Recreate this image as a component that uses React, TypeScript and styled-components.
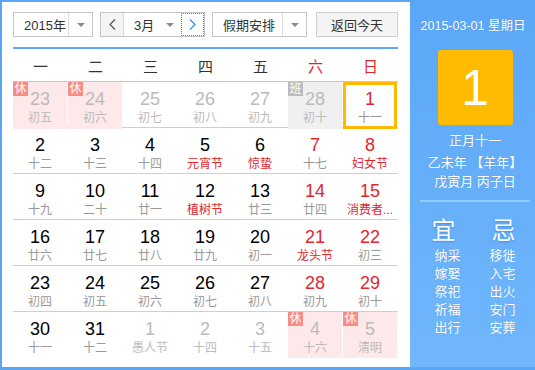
import React from 'react'
import styled, { createGlobalStyle } from 'styled-components'

const GlobalStyle = createGlobalStyle`
	body {
		margin: 0;
		font-family: "Liberation Sans", "Noto Sans CJK SC", sans-serif;
	}
`

const RED = '#e3262c'

const Frame = styled.div`
	width: 535px;
	height: 370px;
	box-sizing: border-box;
	border: 2px solid #5aa6f6;
	border-bottom-width: 3px;
	border-right: 0;
	display: flex;
	background: #fff;
`

const LeftPanel = styled.div`
	width: 408px;
	box-sizing: border-box;
	padding: 10px 12px 0 11px;
`

const Toolbar = styled.div`
	display: flex;
	gap: 7px;
	height: 25px;
	padding-bottom: 10px;
	border-bottom: 2px solid #5ea9f6;
	font-size: 13px;
	color: #333;
`

const Select = styled.div<{ $w: number }>`
	display: flex;
	width: ${p => p.$w}px;
	box-sizing: border-box;
	border: 1px solid #c5c5c5;
	background: #fff;
`

const SelectLabel = styled.div`
	flex: 1;
	display: flex;
	align-items: center;
	padding-left: 10px;
`

const ArrowBox = styled.div<{ $line?: boolean }>`
	width: 23px;
	display: flex;
	align-items: center;
	justify-content: center;
	border-left: ${p => (p.$line ? '1px solid #dcdcdc' : '0')};
	&::after {
		content: '';
		border: 4px solid transparent;
		border-top: 4px solid #8a8a8a;
		border-bottom: 0;
	}
`

const NavButton = styled.div<{ $focus?: boolean }>`
	width: 23px;
	display: flex;
	align-items: center;
	justify-content: center;
	box-sizing: border-box;
	background: ${p => (p.$focus ? '#fff' : '#f4f4f4')};
	border-right: ${p => (p.$focus ? '0' : '1px solid #d8d8d8')};
	outline: ${p => (p.$focus ? '1px dotted #2f8ff0' : 'none')};
	outline-offset: -1px;
`

const TodayButton = styled.div`
	margin-left: auto;
	width: 82px;
	box-sizing: border-box;
	border: 1px solid #cfcfcf;
	background: #f4f4f4;
	display: flex;
	align-items: center;
	justify-content: center;
`

const WeekHeader = styled.div`
	display: grid;
	grid-template-columns: repeat(7, 55px);
	height: 32px;
	align-items: center;
	border-bottom: 1px solid #c8c8c8;
	font-size: 15px;
	color: #333;
	text-align: center;
`

const WeekDay = styled.div<{ $red?: boolean }>`
	color: ${p => (p.$red ? RED : '#333')};
`

const WeekRow = styled.div`
	display: grid;
	grid-template-columns: repeat(7, 55px);
	height: 46px;
	box-sizing: border-box;
	border-bottom: 1px solid #cfcfcf;
	&:last-child {
		border-bottom: 0;
	}
`

const Cell = styled.div<{ $bg: string; $today?: boolean }>`
	position: relative;
	margin-right: 1px;
	box-sizing: border-box;
	text-align: center;
	padding-top: ${p => (p.$today ? 3 : 6)}px;
	background: ${p => p.$bg};
	border: ${p => (p.$today ? '3px solid #ffb900' : '0')};
`

const DayNum = styled.div<{ $color: string }>`
	font-size: 18px;
	line-height: 22px;
	color: ${p => p.$color};
`

const Lunar = styled.div<{ $color: string }>`
	font-size: 12px;
	line-height: 16px;
	white-space: nowrap;
	color: ${p => p.$color};
`

const Badge = styled.span<{ $bg: string }>`
	position: absolute;
	left: 0;
	top: 0;
	width: 15px;
	height: 14px;
	font-size: 12px;
	line-height: 14px;
	color: #fff;
	background: ${p => p.$bg};
`

const RightPanel = styled.div`
	flex: 1;
	background: linear-gradient(#5ba7f7, #70b7fc);
	color: #fff;
	padding: 16px 4px 0 9px;
	display: flex;
	flex-direction: column;
	align-items: center;
	font-size: 13px;
	text-shadow: 0 0 1px rgba(40, 90, 160, 0.35);
`

const DateLine = styled.div`
	line-height: 16px;
	margin-left: -4px;
	font-size: 12.5px;
`

const BigDay = styled.div`
	margin-top: 16px;
	width: 75px;
	height: 75px;
	border-radius: 3px;
	background: #ffbb00;
	display: flex;
	align-items: center;
	justify-content: center;
	font-size: 50px;
	text-shadow: none;
`

const LunarInfo = styled.div`
	margin-top: 7px;
	line-height: 18px;
	text-align: center;
	div + div {
		margin-top: 1px;
	}
	div:nth-child(2) {
		margin-top: 4px;
	}
`

const Divider = styled.div`
	margin-top: 9px;
	width: 110px;
	height: 2px;
	background: #94c9fb;
`

const Almanac = styled.div`
	margin-top: 15px;
	width: 110px;
	display: grid;
	grid-template-columns: 55px 55px;
	text-align: center;
`

const AlmanacTitle = styled.div<{ $shift: number }>`
	font-size: 24px;
	line-height: 28px;
	margin-left: ${p => p.$shift}px;
	margin-bottom: 2px;
	text-shadow: 0 1px 2px rgba(30, 80, 150, 0.4);
`

const AlmanacItem = styled.div`
	line-height: 18px;
`

const Chevron = ({ dir, color }: { dir: 'l' | 'r'; color: string }) => (
	<svg width="7" height="11" viewBox="0 0 7 11">
		<polyline
			points={dir === 'l' ? '6,0.5 1,5.5 6,10.5' : '1,0.5 6,5.5 1,10.5'}
			fill="none"
			stroke={color}
			strokeWidth="1.2"
		/>
	</svg>
)

type Day = {
	d: number
	l: string
	other?: boolean
	fest?: boolean
	badge?: '休' | '班'
	today?: boolean
}

const weeks: Day[][] = [
	[
		{ d: 23, l: '初五', other: true, badge: '休' },
		{ d: 24, l: '初六', other: true, badge: '休' },
		{ d: 25, l: '初七', other: true },
		{ d: 26, l: '初八', other: true },
		{ d: 27, l: '初九', other: true },
		{ d: 28, l: '初十', other: true, badge: '班' },
		{ d: 1, l: '十一', today: true },
	],
	[
		{ d: 2, l: '十二' },
		{ d: 3, l: '十三' },
		{ d: 4, l: '十四' },
		{ d: 5, l: '元宵节', fest: true },
		{ d: 6, l: '惊蛰', fest: true },
		{ d: 7, l: '十七' },
		{ d: 8, l: '妇女节', fest: true },
	],
	[
		{ d: 9, l: '十九' },
		{ d: 10, l: '二十' },
		{ d: 11, l: '廿一' },
		{ d: 12, l: '植树节', fest: true },
		{ d: 13, l: '廿三' },
		{ d: 14, l: '廿四' },
		{ d: 15, l: '消费者...', fest: true },
	],
	[
		{ d: 16, l: '廿六' },
		{ d: 17, l: '廿七' },
		{ d: 18, l: '廿八' },
		{ d: 19, l: '廿九' },
		{ d: 20, l: '初一' },
		{ d: 21, l: '龙头节', fest: true },
		{ d: 22, l: '初三' },
	],
	[
		{ d: 23, l: '初四' },
		{ d: 24, l: '初五' },
		{ d: 25, l: '初六' },
		{ d: 26, l: '初七' },
		{ d: 27, l: '初八' },
		{ d: 28, l: '初九' },
		{ d: 29, l: '初十' },
	],
	[
		{ d: 30, l: '十一' },
		{ d: 31, l: '十二' },
		{ d: 1, l: '愚人节', other: true },
		{ d: 2, l: '十四', other: true },
		{ d: 3, l: '十五', other: true },
		{ d: 4, l: '十六', other: true, badge: '休' },
		{ d: 5, l: '清明', other: true, badge: '休' },
	],
]

const weekNames = ['一', '二', '三', '四', '五', '六', '日']
const good = ['纳采', '嫁娶', '祭祀', '祈福', '出行']
const bad = ['移徙', '入宅', '出火', '安门', '安葬']

function DayCell({ day, col }: { day: Day; col: number }) {
	const weekend = col >= 5
	const numColor = day.other ? '#bbb' : weekend ? RED : '#000'
	const lunarColor = day.fest && !day.other ? RED : day.other ? '#bbb' : '#999'
	const bg = day.badge === '休' ? '#fde9e9' : day.badge === '班' ? '#f0f0f0' : 'transparent'
	return (
		<Cell $bg={bg} $today={day.today}>
			{day.badge && <Badge $bg={day.badge === '休' ? '#f78d87' : '#bcbcbc'}>{day.badge}</Badge>}
			<DayNum $color={numColor}>{day.d}</DayNum>
			<Lunar $color={lunarColor}>{day.l}</Lunar>
		</Cell>
	)
}

export default function App() {
	return (
		<>
			<GlobalStyle />
			<Frame>
				<LeftPanel>
					<Toolbar>
						<Select $w={80}>
							<SelectLabel>2015年</SelectLabel>
							<ArrowBox $line />
						</Select>
						<Select $w={105}>
							<NavButton>
								<Chevron dir="l" color="#555" />
							</NavButton>
							<SelectLabel>3月</SelectLabel>
							<ArrowBox />
							<NavButton $focus>
								<Chevron dir="r" color="#2f8ff0" />
							</NavButton>
						</Select>
						<Select $w={95}>
							<SelectLabel>假期安排</SelectLabel>
							<ArrowBox $line />
						</Select>
						<TodayButton>返回今天</TodayButton>
					</Toolbar>
					<WeekHeader>
						{weekNames.map((n, i) => (
							<WeekDay key={n} $red={i >= 5}>{n}</WeekDay>
						))}
					</WeekHeader>
					{weeks.map((w, ri) => (
						<WeekRow key={ri}>
							{w.map((day, ci) => (
								<DayCell key={ci} day={day} col={ci} />
							))}
						</WeekRow>
					))}
				</LeftPanel>
				<RightPanel>
					<DateLine>2015-03-01 星期日</DateLine>
					<BigDay>1</BigDay>
					<LunarInfo>
						<div>正月十一</div>
						<div>乙未年 【羊年】</div>
						<div>戊寅月 丙子日</div>
					</LunarInfo>
					<Divider />
					<Almanac>
						<AlmanacTitle $shift={-8}>宜</AlmanacTitle>
						<AlmanacTitle $shift={2}>忌</AlmanacTitle>
						{good.map((g, i) => (
							<React.Fragment key={g}>
								<AlmanacItem>{g}</AlmanacItem>
								<AlmanacItem>{bad[i]}</AlmanacItem>
							</React.Fragment>
						))}
					</Almanac>
				</RightPanel>
			</Frame>
		</>
	)
}
